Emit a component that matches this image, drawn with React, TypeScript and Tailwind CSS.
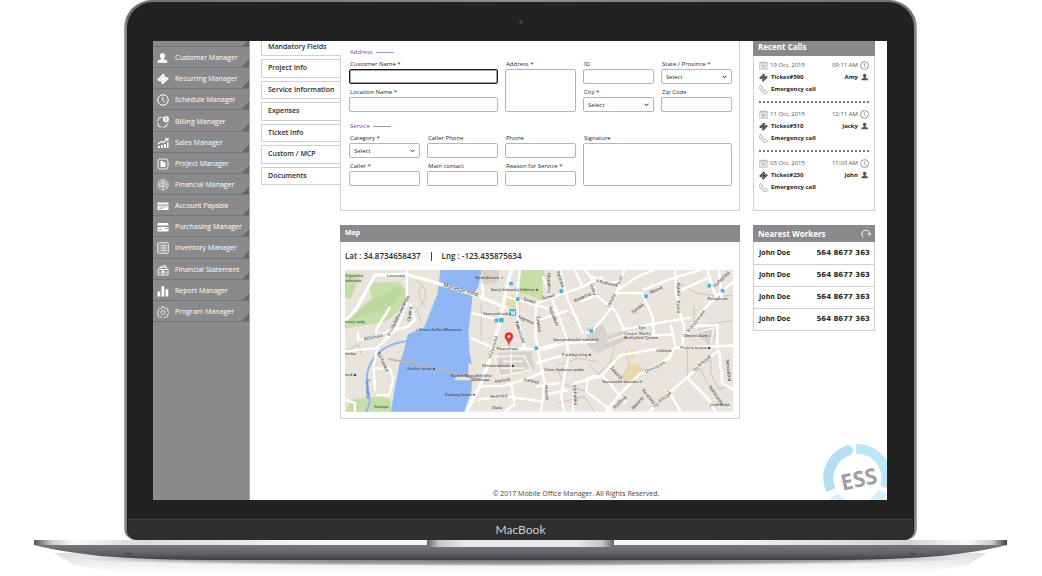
import React from "react";

type IconProps = { className?: string };

const TicketIcon = ({ className }: IconProps) => (
  <svg viewBox="0 0 24 24" className={className} fill="currentColor" aria-hidden="true">
    <path d="M0 13 13 1l3 3a2 2 0 0 0 3.500 3.500l4 4L11 23l-3-3a2 2 0 0 0-3.500-3.500z" />
    <path d="m6.500 12.500 6.500-6 5 5-6.500 6z" fill="none" stroke="#c9c9cb" strokeWidth="1.500" />
  </svg>
);

const ClockIcon = ({ className }: IconProps) => (
  <svg viewBox="0 0 24 24" className={className} fill="none" stroke="currentColor" strokeWidth="2" aria-hidden="true">
    <circle cx="12" cy="12" r="10.500" />
    <path d="M11.500 6v6.500l4.500 4" />
  </svg>
);

const PersonIcon = ({ className }: IconProps) => (
  <svg viewBox="0 0 24 24" className={className} fill="currentColor" aria-hidden="true">
    <path d="M11 2c3 0 5 2.300 5 5.300 0 2.500-1 4.700-2.700 5.800v1.400l5.200 1.800c1.700.700 2.500 2 2.500 5.200H1c0-3.200.800-4.500 2.500-5.200l5.200-1.800v-1.400C7 12 6 9.800 6 7.300 6 4.300 8 2 11 2z" />
  </svg>
);

const BillingIcon = () => (
  <>
    <path d="M11 3H7a5 5 0 0 0-5 5v2M2 13v4a5 5 0 0 0 5 5h2M12 22h3a5 5 0 0 0 5-5v-2" fill="none" stroke="currentColor" strokeWidth="2" />
    <circle cx="18" cy="6.500" r="6" />
    <path d="M16.500 5 18.300 3.500V10" fill="none" stroke="#77787a" strokeWidth="1.600" />
  </>
);

const SalesIcon = () => (
  <>
    <path d="M2 18h4v4H2zM8 16h4v6H8zM14 14h4v8h-4zM20 11h3v11h-3z" />
    <path d="m2 14 7-5 4 2 8-7" fill="none" stroke="currentColor" strokeWidth="2.400" />
    <path d="M15 2h8v8z" />
  </>
);

const ProjectIcon = () => (
  <>
    <rect x="2" y="2" width="20" height="20" rx="5" fill="none" stroke="currentColor" strokeWidth="1.800" />
    <path d="M7 6h5l1.500 2.500H17V18H7z" />
  </>
);

const FinancialIcon = () => (
  <g fill="none" stroke="currentColor" strokeWidth="1.500">
    <path d="M7 21a10.500 10.500 0 1 1 10 0M8.500 17.500a7 7 0 1 1 7 0" />
    <circle cx="12" cy="11.500" r="4" />
    <path d="M12 5v18M9 20l3 3 3-3" />
  </g>
);

const PayableIcon = () => (
  <>
    <path d="M1 5h22v4H1zM1 11h22v9H1z" />
    <path d="M4 14h16M4 17h7" stroke="#8a8a8c" strokeWidth="1.300" />
  </>
);

const PurchasingIcon = () => (
  <>
    <path d="M3 4h18a2 2 0 0 1 2 2v3H1V6a2 2 0 0 1 2-2zM1 12h22v7a2 2 0 0 1-2 2H3a2 2 0 0 1-2-2z" />
    <path d="M4 17h5M16 15h5" stroke="#8a8a8c" strokeWidth="1.800" />
  </>
);

const InventoryIcon = () => (
  <g fill="none" stroke="currentColor" strokeWidth="1.800">
    <rect x="1.500" y="1.500" width="21" height="21" rx="2" />
    <path d="M5 6.500h2.500M9 6.500h10M5 10.200h2.500M9 10.200h10M5 13.900h2.500M9 13.900h10M5 17.600h2.500M9 17.600h10" />
  </g>
);

const StatementIcon = () => (
  <g fill="none" stroke="currentColor" strokeWidth="1.800">
    <path d="M2 11h20v11H2zM3 8l13-6 3 5M6 8l12-2 2 4" />
    <circle cx="12" cy="16.500" r="3" />
    <path d="M4 16.500h3M17 16.500h3M12 12v9" />
  </g>
);

const ReportIcon = () => (
  <path d="M1 13h5.500v10H1zM9 2.500h5.500V23H9zM17 8.500h5.500V23H17z" />
);

const GearIcon = () => (
  <g fill="none" stroke="currentColor" strokeWidth="1.500" strokeLinejoin="round">
    <path d="m10 1.500h4l.600 3 2 .900 2.700-1.700 2.700 2.800-1.700 2.600.900 2.100 2.300.500v3.800l-2.600.500-.800 2 1.600 2.700-2.800 2.700-2.500-1.700-2 .800-.600 2.500h-4l-.500-2.600-2.100-.800-2.600 1.600-2.600-2.700 1.700-2.500-.900-2-2.300-.500v-3.800l2.500-.500.800-2.100-1.600-2.600 2.700-2.800 2.500 1.600 2.100-.800z" />
    <circle cx="12" cy="13" r="4" />
  </g>
);

const menu: { label: string; icon: React.ReactNode }[] = [
  { label: "Customer Manager", icon: <PersonIcon /> },
  { label: "Recurring Manager", icon: <TicketIcon /> },
  { label: "Schedule Manager", icon: <ClockIcon /> },
  { label: "Billing Manager", icon: <BillingIcon /> },
  { label: "Sales Manager", icon: <SalesIcon /> },
  { label: "Project Manager", icon: <ProjectIcon /> },
  { label: "Financial Manager", icon: <FinancialIcon /> },
  { label: "Account Payable", icon: <PayableIcon /> },
  { label: "Purchasing Manager", icon: <PurchasingIcon /> },
  { label: "Inventory Manager", icon: <InventoryIcon /> },
  { label: "FInancial Statement", icon: <StatementIcon /> },
  { label: "Report Manager", icon: <ReportIcon /> },
  { label: "Program Manager", icon: <GearIcon /> },
];

const tabs = [
  "Project Info",
  "Service Information",
  "Expenses",
  "Ticket Info",
  "Custom / MCP",
  "Documents",
];

const calls = [
  { date: "19 Oct, 2015", time: "09:11 AM", ticket: "Ticket#590", name: "Amy" },
  { date: "11 Oct, 2015", time: "12:11 AM", ticket: "Ticket#510", name: "Jacky" },
  { date: "03 Oct, 2015", time: "11:03 AM", ticket: "Ticket#230", name: "John" },
];

const workers = ["John Doe", "John Doe", "John Doe", "John Doe"];

const Sidebar = () => (
  <aside className="w-[97px] shrink-0 bg-[#8a8a8c] border-r border-[#a9a9ab]">
    <div className="h-[6px] border-b border-[#747578] bg-[linear-gradient(to_top_left,#67686b_50%,transparent_50%)] bg-[length:6px_6px] bg-no-repeat bg-right-bottom" />
    <nav className="grid grid-rows-13 h-[275px]">
      {menu.map((item) => (
        <a
          key={item.label}
          href="#"
          className="flex items-center gap-[6px] pl-1 pt-[2px] border-b border-[#747578] text-white text-[7px] leading-[10px] font-medium whitespace-nowrap bg-[linear-gradient(to_top_left,#67686b_50%,transparent_50%)] bg-[length:7px_7px] bg-no-repeat bg-right-bottom"
        >
          <svg viewBox="0 0 24 24" className="size-3 shrink-0" fill="currentColor" aria-hidden="true">
            {item.icon}
          </svg>
          {item.label}
        </a>
      ))}
    </nav>
  </aside>
);

const Tabs = () => (
  <div className="w-[79px] shrink-0 flex flex-col text-[7px] leading-[10px] font-semibold text-[#2b2b2b]">
    <button className="relative z-10 -mr-px h-[15px] pl-[6px] pb-[2px] text-left bg-white border-l border-b border-[#cfcfd1]">
      Mandatory Fields
    </button>
    <div className="mt-[3px] grid grid-rows-6 gap-[3px] h-[126px]">
      {tabs.map((tab) => (
        <button key={tab} className="pl-[6px] text-left whitespace-nowrap border border-r-0 border-[#cfcfd1]">
          {tab}
        </button>
      ))}
    </div>
  </div>
);

const Field = ({
  label,
  id,
  kind = "input",
  className = "",
  active = false,
}: {
  label: string;
  id: string;
  kind?: "input" | "select" | "textarea";
  className?: string;
  active?: boolean;
}) => (
  <div className={`flex flex-col min-w-0 ${className}`}>
    <label htmlFor={id} className="h-[9px] pl-px leading-[8px] whitespace-nowrap">
      {label}
    </label>
    {kind === "input" && (
      <input
        id={id}
        className={`w-full h-[15px] rounded-[2px] px-1 outline-none border ${
          active ? "border-[#1d1d1f] ring-1 ring-inset ring-[#1d1d1f]/40" : "border-[#b5b5b9]"
        }`}
      />
    )}
    {kind === "textarea" && (
      <textarea id={id} className="block w-full flex-1 resize-none rounded-[2px] border border-[#b5b5b9] p-1" />
    )}
    {kind === "select" && (
      <div className="relative h-[15px]">
        <select
          id={id}
          className="block w-full h-[15px] appearance-none rounded-[2px] border border-[#b5b5b9] bg-white pl-1 leading-[8px]"
        >
          <option>Select</option>
        </select>
        <svg viewBox="0 0 10 7" className="absolute right-[5px] top-[6px] w-[5px] h-1 pointer-events-none" aria-hidden="true">
          <path d="m1 1 4 4 4-4" fill="none" stroke="#222" strokeWidth="2" />
        </svg>
      </div>
    )}
  </div>
);

const SectionTitle = ({ children }: { children: React.ReactNode }) => (
  <h2 className="flex items-center gap-[3px] pl-px mb-[3px] text-[6px] leading-[10px] font-medium text-[#7b3f98]">
    {children}
    <span className="w-[18px] h-px bg-[#b58cc6]" />
  </h2>
);

const TicketForm = () => (
  <form className="border border-t-0 border-[#cfcfd1] pt-[6px] pl-2 pr-[7px] pb-[24px] text-[6px] font-medium text-[#1f1f1f]">
    <SectionTitle>Address</SectionTitle>
    <div className="grid grid-cols-5 gap-x-[7px] gap-y-1">
      <Field id="customer" label="Customer Name *" className="col-span-2" active />
      <Field id="address" label="Address *" kind="textarea" className="row-span-2" />
      <Field id="ident" label="ID" />
      <Field id="state" label="State / Province *" kind="select" />
      <Field id="location" label="Location Name *" className="col-span-2" />
      <Field id="city" label="City *" kind="select" />
      <Field id="zip" label="Zip Code" />
    </div>
    <div className="mt-[9px]">
      <SectionTitle>Service</SectionTitle>
    </div>
    <div className="grid grid-cols-5 gap-x-[7px] gap-y-1">
      <Field id="category" label="Category *" kind="select" />
      <Field id="callerPhone" label="Caller Phone" />
      <Field id="phone" label="Phone" />
      <Field id="signature" label="Signature" kind="textarea" className="col-span-2 row-span-2" />
      <Field id="caller" label="Caller *" />
      <Field id="contact" label="Main contact" />
      <Field id="reason" label="Reason for Service *" />
    </div>
  </form>
);

// [x, y, rotation, text]
const mapLabels: [number, number, number, string][] = [
  [0, 22, 0, "Vojanská"],
  [0, 35, 0, "zahrada"],
  [126, 20, 0, "Letenská"],
  [0, 158, 0, "nový sady"],
  [58, 212, -12, "Míšeňská"],
  [0, 257, 0, "lenka"],
  [134, 199, -63, "U Lužického semináře"],
  [196, 156, -82, "Cihelná"],
  [212, 184, 0, "⌂ Franz Kafka Museum"],
  [97, 250, 65, "Na Kampě"],
  [0, 319, 0, "zeď ♟"],
  [88, 416, 0, "Kampa"],
  [187, 301, 0, "Karlův most ●"],
  [392, 26, 0, "Rudolfinum ♫"],
  [438, 64, 0, "Starý židovský hřbitov ●"],
  [416, 134, 0, "Staroměstská"],
  [535, 92, 14, "Široká"],
  [520, 143, 25, "Kaprova"],
  [512, 155, 72, "Valentinská"],
  [575, 140, 82, "Žatecká"],
  [440, 267, -74, "Křižovnická"],
  [456, 242, 0, "Platnéřská"],
  [413, 291, 0, "Klementinum ♟"],
  [318, 322, 0, "Kostel Nejsvětějšího"],
  [378, 335, 0, "Salvátora"],
  [452, 340, -10, "Karlova"],
  [301, 378, 0, "Karlovy lázně ♦"],
  [437, 386, -4, "Anenská"],
  [442, 418, 0, "Zlatá"],
  [538, 333, 12, "Karlova"],
  [595, 91, -18, "Široká"],
  [608, 10, 88, "Maiselova"],
  [612, 112, 68, "Maiselova"],
  [636, 5, 72, "Pařížská"],
  [690, 97, -23, "Kostečná"],
  [738, 42, 75, "Dušní"],
  [754, 35, 14, "V Kolkovně"],
  [828, 44, -75, "Kozí"],
  [796, 114, -64, "Dlouhá"],
  [918, 72, -23, "Masná"],
  [866, 132, -38, "Týnská"],
  [998, 40, 87, "Rybná"],
  [998, 92, 87, "Rybná"],
  [1034, 188, -52, "Králodvorská"],
  [1090, 90, 0, "Palladium"],
  [1112, 54, -44, "Truhlářská"],
  [1016, 203, 0, "Obecní dům ♪"],
  [1008, 238, 0, "Prašná brána ■"],
  [882, 178, 0, "Týn"],
  [840, 196, 0, "Chrám Matky"],
  [840, 209, 0, "Boží před Týnem"],
  [626, 214, 0, "Staroměstské náměstí"],
  [652, 259, 0, "Pražský orloj ●"],
  [598, 305, 0, "Clam-Gallasův palác"],
  [936, 246, 0, "Celetná"],
  [904, 310, -26, "Ovocný trh"],
  [796, 296, 45, "Železná"],
  [774, 341, 0, "Stavovské divadlo ✔"],
  [1052, 307, -42, "Na Příkopě"],
  [1146, 270, 84, "Senovážná"],
  [600, 346, 84, "Husova"],
  [686, 346, 87, "Michalská"],
  [812, 417, -43, "Rytířská"],
  [892, 362, 50, "Havelská"],
  [932, 415, -42, "Na Příkopě"],
  [1094, 352, 55, "Nekázanka"],
  [1098, 408, 0, "Jindřišská"],
  [868, 420, -48, "Melantr."],
];

const MapView = () => (
  <svg
    viewBox="0 0 1167 426"
    className="block w-full h-auto"
    role="img"
    aria-label="Street map"
    fontFamily='"Noto Sans", sans-serif'
  >
    <rect width="1167" height="426" fill="#e9e4dc" />
    <g fill="#c6dfa9">
      <path d="M0 10h44L30 55 15 90 0 80z" />
      <path d="M70 40l90-5 28 30-8 35-45 48-40 14-60 7-35 8v-32l50-25 30-35z" />
      <path d="M0 426l16-35 28-5 30-2 40-5 22 10 4 37z" />
      <path d="M528 0h72v20h-5v66l-8 4-28-12-35-8z" />
    </g>
    <path d="M50 105l70-30 40-28 15 18-30 40-50 22-70 18z" fill="#b5d397" opacity=".6" />
    <path d="M476 75h58l-8 50-60-8z" fill="#ead9ac" />
    <path d="M858 285l18-5 24 20-15 30-42 2-15-12z" fill="#ead9ac" />
    <path d="M860 240h16l-6 25h-14z" fill="#ead9ac" />
    <g fill="#d8d2ca">
      <path d="M725 175l50-10 20 38 2 30-40 20-25-25z" />
      <path d="M460 250l100-5 10 55-110 20z" />
      <path d="M412 0h50v35l-45 10z" />
      <path d="M788 200l52-20 4 32-45 22zM1060 178l54-10 2 30-20 30-22-22z" />
    </g>
    <path d="M287 0h124l-10 50-18 30-4 42-8 60 3 62 8 40-11-6v42h-38l-2 12h50v28l-22 66H138l12-70 14-75 15-45 10-42 49-22 22-55 18-45z" fill="#8fb6f5" />
    <path d="M210 212c-60 2-105 24-128 60s-18 80-10 105-4 34-8 49" fill="none" stroke="#8fb6f5" strokeWidth="6" />
    {/* side streets */}
    <g fill="none" stroke="#cbc5bd" strokeWidth="3">
      <path d="M210 30c30 15 35 30 30 60l-25 30 15 40M235 35c-15 20-20 50 10 80" />
      <path d="M130 268l90 15 150 38 60 12" stroke="#bdb4a8" strokeWidth="5" />
      <path d="M0 245l40-20 10 30M20 240l30 5M640 286l60-20 60 10M810 234l-10 40-60 60M845 240l10 50-20 30M1030 240v90M730 280l60 60 60 50M1000 40l60 30 70 10 37-5M1050 110v60l117-18M1100 250v60l25 50 25-10" />
      <path d="M640 300l20 45 80 25M410 100v120M660 120l60 60M1060 280l35 70M640 400l80-20 30 46" />
    </g>
    <g fill="none" stroke="#f6f4f0" strokeWidth="5">
      <path d="M450 260h90l20 40-95 20zM475 275h60M470 295h70M500 252v60" />
      <path d="M788 215l55-20M1065 185l45-10-10 45" />
    </g>
    {/* main streets */}
    <g fill="none" stroke="#fff" strokeWidth="7" strokeLinejoin="round">
      <path d="M0 150c30-20 45-50 60-80L90 15l90-2 60 15 160 50 90 38" strokeWidth="10" />
      <path d="M186 0v100l-30 75-60 60-96 10M96 235l-10 60 5 70M155 175l-80 30-35 5-2-25M135 110c-10 30-50 60-40 90M195 100l15 50-20 20-40 10" />
      <path d="M90 295l45 2 10 30-12 50h-40M0 390l30 10v26" />
      <path d="M500 0l-15 60-20 100-30 110-30 80-40 76" strokeWidth="11" />
      <path d="M412 40l5 40M480 78l120 35 40 10M383 130l80 20M378 205l60 25M526 0l-10 80 5 70 20 85M575 100l-2 100 15 80 12 60-10 86M470 235l100 2 70-15" />
      <path d="M575 100l140-50 60-30M595 20l25 60 20 50 25 70 8 60-14 60-8 60 10 60M648 0l22 90 46 100M715 50l-25-50M740 20L720 0M670 122l-95 30M575 245l90-25 90-5M575 280l90-26" />
      <path d="M740 20l15 55-45 20M755 75l60 50 20 45 8 10M740 20l60 20 35-10M840 0l-22 65-25 60-50 60-20 5M818 68l75 2 32 70 5 60M820 60l60-40 50-20M830 180l80-15 130-22M843 190l90 6 60-2M895 60l90-35 85-25M993 0l2 60 10 60 15 50-5 60M980 165l15 70" />
      <path d="M1090 0l25 80-45 50-40 60M1115 80l52-45M1125 0l8 90M1010 60l80-35M1040 170l80-5v70M990 235l177-8M990 235l-15 30-90 50-60 60-40 51" strokeWidth="8" />
      <path d="M1125 240l-70 60-80 70-60 56M1125 240l10 100 32 20M1030 325l60 60 25 41M980 375l30 51" strokeWidth="8" />
      <path d="M690 340l40-10 45-10 20 20 50 60M690 340l-5 86M730 335l-5 30 80 61M600 376l70-15M575 350l70-10M410 350l70-2 80-25 40-20M400 390l80-10 110 15M500 345l10 60-30 21M770 320l60-65 110-18" />
      <path d="M720 335c10-18 45-18 55-12" />
    </g>
    <g fill="#43b3e6">
      {[
        [494, 35],
        [514, 82],
        [450, 146],
        [570, 230],
        [645, 58],
        [735, 178],
        [900, 74],
        [1090, 42],
        [1130, 57],
      ].map(([x, y]) => (
        <rect key={`${x}-${y}`} x={x} y={y} width="11" height="11" rx="2" />
      ))}
      <rect x="463" y="144" width="14" height="14" rx="2" />
      <rect x="495" y="118" width="20" height="20" rx="3" />
    </g>
    <text x="498" y="134" fontSize="15" fontWeight="700" fill="#fff">M</text>
    <g fill="#2f2d2b">
      {mapLabels.map(([x, y, angle, text]) => (
        <text key={`${text}-${x}`} transform={`translate(${x} ${y}) rotate(${angle})`} fontSize="13">
          {text}
        </text>
      ))}
      <text transform="translate(295 50) rotate(16)" fontSize="16">Mánesův most</text>
      <text transform="translate(62 328) rotate(88)" fontSize="14" fill="#2f5fa8">Čertovka</text>
    </g>
    <path d="M493 227c-2-14-12-17-12-27a12 12 0 0 1 24 0c0 10-10 13-12 27z" fill="#e8382c" stroke="#b3261d" strokeWidth="1" />
    <circle cx="493" cy="200" r="4" fill="#fff" />
  </svg>
);

const CallIcon = ({ kind }: { kind: "date" | "phone" }) =>
  kind === "date" ? (
    <svg viewBox="0 0 24 24" className="size-[9px]" fill="none" stroke="#9a9a9c" strokeWidth="1.600" aria-hidden="true">
      <path d="M2 4h20v18H2zM2 8h20M6 1v5M12 1v5M18 1v5M6 12h12M6 15h12M6 18h12" />
    </svg>
  ) : (
    <svg viewBox="0 0 24 24" className="size-[9px]" fill="none" stroke="#77787a" strokeWidth="1.600" aria-hidden="true">
      <path d="M5 1.500 2 4c-2 4 2 10 6 14s9 6 12 4.500l3-3.500-5-5-3.500 2c-3-1.500-5-4-6.500-6.500l2-3.500z" />
    </svg>
  );

const RecentCalls = () => (
  <section className="border border-t-0 border-[#cfcfd1] pb-[11px]">
    <h2 className="-mx-px h-[15px] pl-[5px] bg-[#8a8a8c] text-white text-[8px] leading-[12px] font-bold">Recent Calls</h2>
    <ul className="px-[5px] pt-[3px] text-[6px] leading-[12px] font-bold text-[#222]">
      {calls.map((call) => (
        <li key={call.ticket} className="pb-[6px] mb-[5px] border-b-2 border-dotted border-[#77787a] last:border-0 last:mb-0">
          <div className="flex items-center gap-[2px] font-normal text-[#555]">
            <CallIcon kind="date" />
            <span className="mr-auto">{call.date}</span>
            <span>{call.time}</span>
            <ClockIcon className="size-[9px] text-[#77787a]" />
          </div>
          <div className="flex items-center gap-[3px]">
            <TicketIcon className="size-[9px] text-[#444]" />
            <span className="mr-auto">{call.ticket}</span>
            <span>{call.name}</span>
            <PersonIcon className="size-2 text-[#555]" />
          </div>
          <div className="flex items-center gap-[3px]">
            <CallIcon kind="phone" />
            <span>Emergency call</span>
          </div>
        </li>
      ))}
    </ul>
  </section>
);

const NearestWorkers = () => (
  <section className="mt-[14px] border border-[#cfcfd1] border-t-0">
    <div className="-mx-px h-[17px] pl-[5px] pr-1 flex items-center justify-between bg-[#8a8a8c] text-white">
      <h2 className="text-[8px] leading-[10px] font-bold">Nearest Workers</h2>
      <button aria-label="Refresh">
        <svg viewBox="0 0 24 24" className="block size-[10px]" fill="none" stroke="currentColor" strokeWidth="2.200" aria-hidden="true">
          <path d="M6 20A9.500 9.500 0 1 1 21 13" />
          <path d="m16 10 5 5 3-6" />
        </svg>
      </button>
    </div>
    <table className="w-full text-[7px] leading-[10px] font-bold text-[#222]">
      <tbody>
        {workers.map((name, i) => (
          <tr key={i} className="h-[22px] border-t border-[#cfcfd1] first:border-t-0">
            <td className="pl-[5px]">{name}</td>
            <td className="pr-1 text-right font-['DejaVu_Sans']">564 8677 363</td>
          </tr>
        ))}
      </tbody>
    </table>
  </section>
);

const EssBadge = () => (
  <svg viewBox="0 0 68 68" className="absolute -right-1 -bottom-3 size-[68px]" aria-hidden="true">
    <g fill="none" strokeWidth="10">
      <path d="M8 46A29 29 0 0 1 29 5.500" stroke="#b3def4" />
      <path d="M33 5A29 29 0 0 1 62 43" stroke="#bde6fa" />
      <path d="M60 48A29 29 0 0 1 11 52" stroke="#d3effc" />
    </g>
    <path d="m27 0 5 6-4 7" fill="none" stroke="#fff" strokeWidth="2.500" />
    <path d="m26.500 1 4 5-3.500 5.500z" fill="#b3def4" />
    <path d="m7 53 3-5 8 2" fill="none" stroke="#fff" strokeWidth="2.500" />
    <text
      x="36"
      y="43"
      textAnchor="middle"
      transform="rotate(-12 36 36)"
      fontSize="22"
      fontWeight="700"
      fontFamily='"Open Sans", sans-serif'
      fill="#a0a0a2"
    >
      ESS
    </text>
  </svg>
);

const LaptopBase = () => (
  <svg viewBox="0 0 973 36" preserveAspectRatio="none" className="block w-full h-9" aria-hidden="true">
    <defs>
      <linearGradient id="deck" x1="0" x2="1" y1="0" y2="0">
        <stop offset="0" stopColor="#55565a" />
        <stop offset=".018" stopColor="#c9c9cc" />
        <stop offset=".04" stopColor="#fbfbfc" />
        <stop offset=".1" stopColor="#dcdcde" />
        <stop offset=".3" stopColor="#f5f4f7" />
        <stop offset=".7" stopColor="#f5f4f7" />
        <stop offset=".9" stopColor="#d4d4d7" />
        <stop offset=".96" stopColor="#fbfbfc" />
        <stop offset=".985" stopColor="#c9c9cc" />
        <stop offset="1" stopColor="#3d3d40" />
      </linearGradient>
      <linearGradient id="under" x1="0" x2="0" y1="0" y2="1">
        <stop offset="0" stopColor="#77787d" />
        <stop offset=".6" stopColor="#5f6064" />
        <stop offset="1" stopColor="#3c3c3f" />
      </linearGradient>
      <linearGradient id="notch" x1="0" x2="1" y1="0" y2="0">
        <stop offset="0" stopColor="#626367" />
        <stop offset=".06" stopColor="#c4c4c8" />
        <stop offset=".2" stopColor="#e9e9ec" />
        <stop offset=".8" stopColor="#e9e9ec" />
        <stop offset=".94" stopColor="#c4c4c8" />
        <stop offset="1" stopColor="#626367" />
      </linearGradient>
      <radialGradient id="floor" cx=".5" cy=".5" r=".5">
        <stop offset="0" stopColor="#000" stopOpacity=".55" />
        <stop offset=".75" stopColor="#000" stopOpacity=".3" />
        <stop offset="1" stopColor="#000" stopOpacity="0" />
      </radialGradient>
      <linearGradient id="haze" x1="0" x2="0" y1="0" y2="1">
        <stop offset="0" stopColor="#000" stopOpacity=".13" />
        <stop offset="1" stopColor="#000" stopOpacity="0" />
      </linearGradient>
    </defs>
    <path d="M20 13h933l-20 12-50 9H90L40 25z" fill="url(#haze)" />
    <ellipse cx="486" cy="19" rx="440" ry="7" fill="url(#floor)" />
    <path d="M0 5h973c-15 4-40 8-66 11q-50 4-110 4H176q-60 0-110-4C40 13 15 9 0 5z" fill="url(#under)" />
    <rect width="973" height="5" fill="url(#deck)" />
    <path d="M393 0h187v5q0 2-4 2H397q-4 0-4-2z" fill="url(#notch)" />
    <path d="M92 14h6M876 14h6" stroke="#3c3c3f" strokeWidth="1" />
  </svg>
);

const App = () => {
  return (
    <div className="min-h-screen bg-white pl-[34px] pr-[35px] overflow-hidden font-['Open_Sans',sans-serif]">
      {/* lid */}
      <div className="mx-[90px] rounded-t-[28px] rounded-b-[12px] pt-[2px] px-[3px] bg-[linear-gradient(to_right,#a9abb1,#6f7177_3px,#8c8e94_50%,#6f7177_calc(100%-3px),#a9abb1)]">
        <div className="rounded-t-[26px] rounded-b-[10px] bg-[#222] overflow-hidden">
          <div className="h-[39px] flex items-center justify-center">
            <span className="size-1 rounded-full bg-[#3d3f45]" />
          </div>
          <div className="relative flex ml-[26px] mr-[27px] bg-white overflow-hidden">
            <Sidebar />
            <main className="flex-1 min-w-0 pl-[11px] pr-3">
              <div className="flex">
                <Tabs />
                <div className="flex-1 min-w-0">
                  <TicketForm />
                  <section className="mt-[14px] border border-[#cfcfd1] border-t-0 pb-[6px]">
                    <h2 className="-mx-px h-[17px] pl-[5px] bg-[#8a8a8c] text-white text-[7px] leading-[16px] font-bold">Map</h2>
                    <div className="h-[28px] pl-1 flex items-center text-[8px] leading-[10px] font-semibold text-[#2b2b2b]">
                      <span>Lat : 34.8734658437</span>
                      <span className="w-px h-[9px] mx-[10px] bg-[#444]" />
                      <span>Lng : -123.435875634</span>
                    </div>
                    <div className="pl-1 pr-[6px]">
                      <MapView />
                    </div>
                  </section>
                </div>
                <div className="w-[122px] shrink-0 ml-[13px]">
                  <RecentCalls />
                  <NearestWorkers />
                </div>
              </div>
              <footer className="mt-[70px] pb-px pl-4 text-center text-[7px] leading-[10px] text-[#444]">
                © 2017 Mobile Office Manager. All Rights Reserved.
              </footer>
            </main>
            <EssBadge />
          </div>
          <div className="h-[19px]" />
          <div className="h-[21px] mx-[1px] rounded-b-[9px] border-t border-[#3a3a3c] bg-[#2e2e30] text-center font-['Lato',sans-serif] text-[12px] leading-[20px] text-[#cfcfd1]">
            MacBook
          </div>
        </div>
      </div>
      <LaptopBase />
    </div>
  );
};

export default App;
